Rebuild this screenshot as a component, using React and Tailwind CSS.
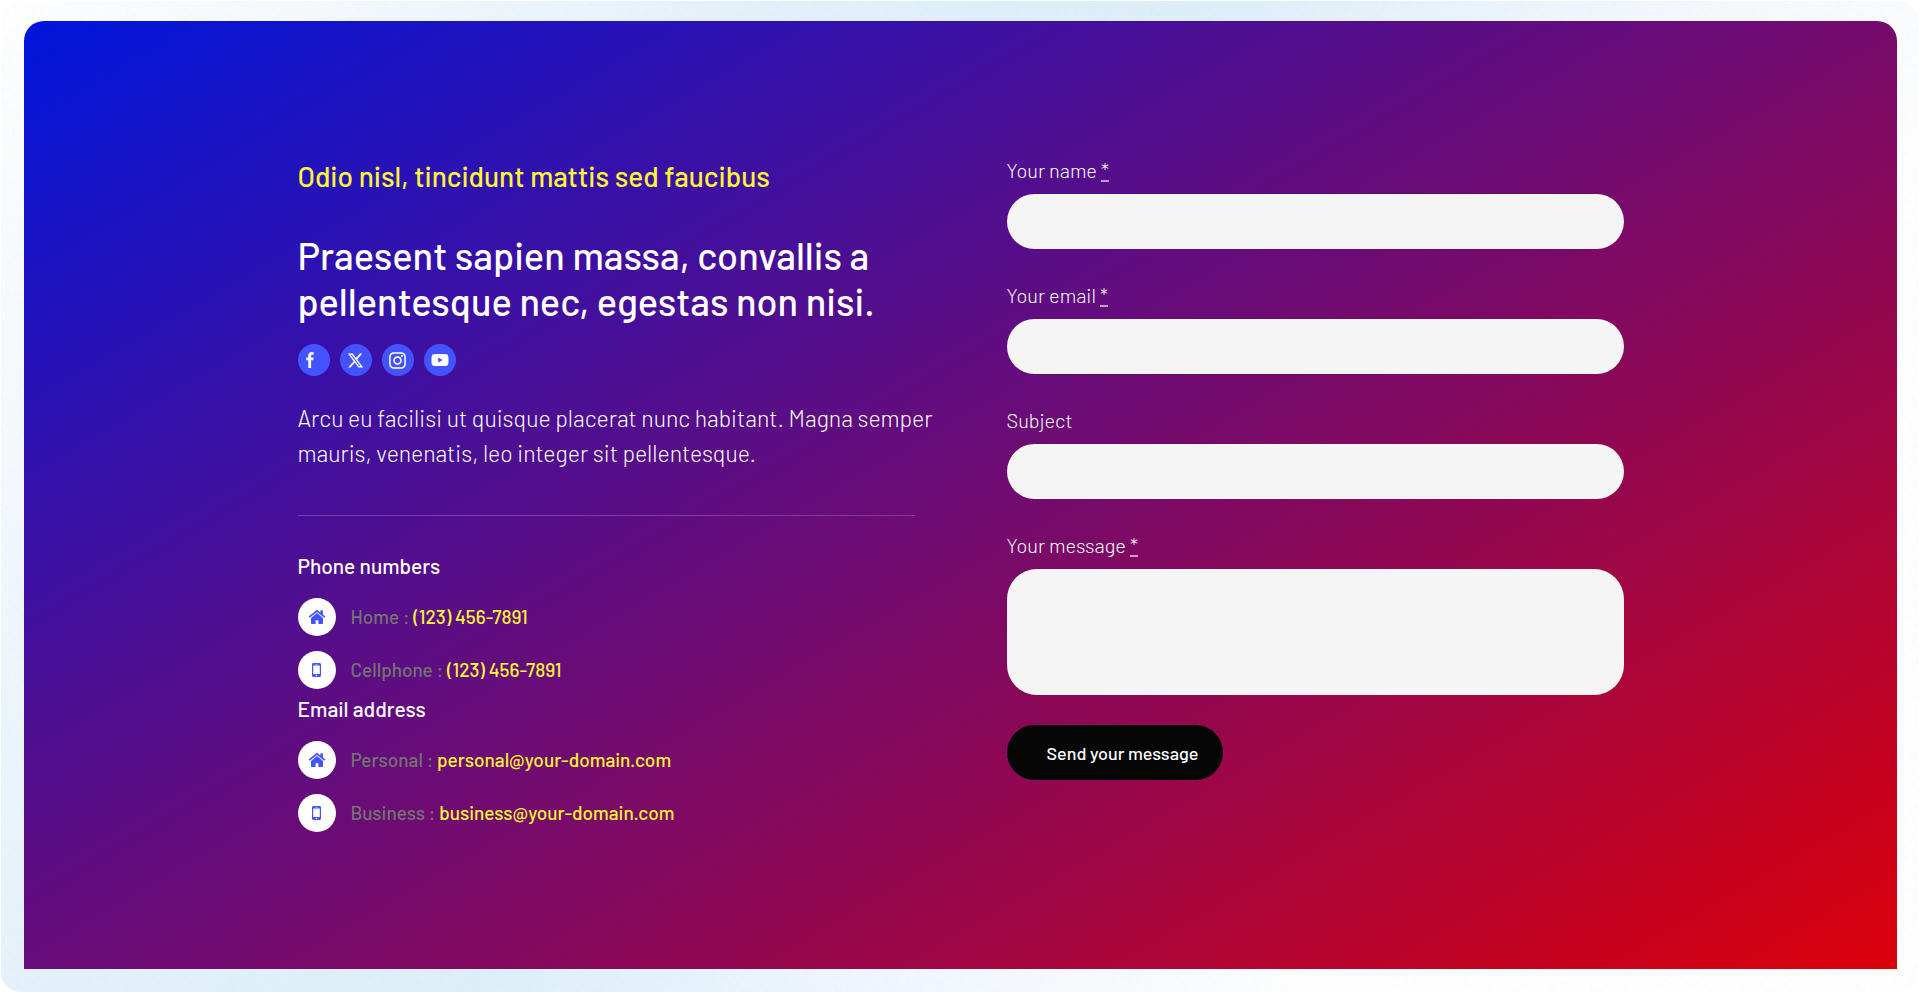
import { FaInstagram } from 'react-icons/fa';
import { FaXTwitter, FaYoutube } from 'react-icons/fa6';

const FacebookIcon = ({ size, className }) => (
    <svg width={size / 2} height={size} viewBox="0 0 8 16" fill="currentColor" className={className} aria-hidden="true">
        <path d="M7.600.1v2.600H6.200c-.9 0-1.100.5-1.100 1.100v1.700h2.500l-.3 2.700H5.100V16H2.300V8.200H.2V5.500h2.100V3.500C2.300 1.300 3.600 0 5.600 0c.9 0 1.700.1 2 .1z" />
    </svg>
);

const SOCIALS = [
    { id: 'facebook', label: 'Facebook', icon: FacebookIcon, size: 16, className: 'mr-2' },
    { id: 'x', label: 'X', icon: FaXTwitter, size: 17, className: '' },
    { id: 'instagram', label: 'Instagram', icon: FaInstagram, size: 19, className: '' },
    { id: 'youtube', label: 'YouTube', icon: FaYoutube, size: 18, className: '' },
];

const CONTACTS = [
    {
        title: 'Phone numbers',
        rows: [
            { label: 'Home', value: '(123) 456-7891', href: 'tel:1234567891', icon: 'home' },
            { label: 'Cellphone', value: '(123) 456-7891', href: 'tel:1234567891', icon: 'mobile' },
        ],
    },
    {
        title: 'Email address',
        rows: [
            { label: 'Personal', value: 'personal@your-domain.com', href: 'mailto:personal@your-domain.com', icon: 'home' },
            { label: 'Business', value: 'business@your-domain.com', href: 'mailto:business@your-domain.com', icon: 'mobile' },
        ],
    },
];

const FIELDS = [
    { id: 'name', label: 'Your name', type: 'text', required: true },
    { id: 'email', label: 'Your email', type: 'email', required: true },
    { id: 'subject', label: 'Subject', type: 'text', required: false },
];

const HomeIcon = () => (
    <svg width="18" height="16" viewBox="0 0 18 16" fill="currentColor" aria-hidden="true">
        <path d="M9 4.100 3 9v5.300c0 .4.300.7.700.7h3.900v-3.800h2.800V15h3.900c.4 0 .7-.3.700-.7V9z" />
        <path d="M9 1c.3 0 .7.100 1 .4l2.400 2V1.500c0-.2.100-.3.300-.3h1.900c.2 0 .3.100.3.300v3.900l2.200 1.800c.2.100.2.300.1.500l-.7.8c-.1.100-.3.200-.5 0L9 2.900 2 8.500c-.2.200-.4.100-.5 0l-.7-.8c-.1-.2-.1-.4.100-.5L8 1.400c.3-.3.700-.4 1-.4z" />
    </svg>
);

const MobileIcon = () => (
    <svg width="9" height="14" viewBox="0 0 9 14" fill="currentColor" aria-hidden="true">
        <path
            fillRule="evenodd"
            d="M1.500 0h6C8.300 0 9 .7 9 1.500v11c0 .8-.7 1.500-1.500 1.500h-6C.7 14 0 13.300 0 12.500v-11C0 .7.7 0 1.500 0zM1.200 2.500v8.500h6.600V2.500zM4.500 11.700a.8.8 0 1 0 0 1.600.8.8 0 0 0 0-1.600zM3.400 1v.4h2.200V1z"
        />
    </svg>
);

const Required = () => (
    <abbr title="required" className="underline decoration-white/60 decoration-solid decoration-2 underline-offset-2">*</abbr>
);

const ContactGroup = ({ title, rows }) => (
    <section>
        <h3 className="text-[21px] leading-8 font-medium">{title}</h3>
        <ul className="mt-4 flex flex-col gap-[15px]">
            {rows.map(row => (
                <li key={row.label} className="flex items-center gap-[15px] text-[19px] leading-6">
                    <span className="flex size-[38px] shrink-0 items-center justify-center rounded-full bg-white text-[#4353ff]">
                        {row.icon === 'home' ? <HomeIcon /> : <MobileIcon />}
                    </span>
                    <span className="font-medium text-[#747474]">
                        {row.label} : <a href={row.href} className="text-[#fff536]">{row.value}</a>
                    </span>
                </li>
            ))}
        </ul>
    </section>
);

const ContactInfo = () => (
    <div>
        <p className="mt-0.5 text-[28px] leading-9 font-medium text-[#fff536]">Odio nisl, tincidunt mattis sed faucibus</p>
        <h2 className="mt-[38px] text-[38px] leading-[46px] font-medium">
            Praesent sapien massa, convallis a<br />pellentesque nec, egestas non nisi.
        </h2>
        <ul className="mt-5 flex gap-[10px]">
            {SOCIALS.map(social => {
                const Icon = social.icon;
                return (
                    <li key={social.id}>
                        <a href="#" aria-label={social.label} className="flex size-8 items-center justify-center rounded-full bg-[#4353ff]">
                            <Icon size={social.size} className={social.className} />
                        </a>
                    </li>
                );
            })}
        </ul>
        <p className="mt-[25px] text-[23px] leading-[35px] font-light whitespace-nowrap">
            Arcu eu facilisi ut quisque placerat nunc habitant. Magna semper<br />
            mauris, venenatis, leo integer sit pellentesque.
        </p>
        <hr className="mt-11 mb-[34px] border-white/20" />
        <div className="flex flex-col gap-1">
            {CONTACTS.map(group => <ContactGroup key={group.title} {...group} />)}
        </div>
    </div>
);

const ContactForm = () => (
    <form className="flex flex-col items-start" onSubmit={e => e.preventDefault()}>
        {FIELDS.map(field => (
            <div key={field.id} className="mb-8 w-full">
                <label htmlFor={field.id} className="mb-[10px] block text-xl leading-7 font-light">
                    {field.label} {field.required && <Required />}
                </label>
                <input
                    id={field.id}
                    type={field.type}
                    required={field.required}
                    className="block h-[55px] w-full rounded-full bg-[#f5f5f5] px-6 text-gray-900"
                />
            </div>
        ))}
        <div className="mb-[30px] w-full">
            <label htmlFor="message" className="mb-[10px] block text-xl leading-7 font-light">
                Your message <Required />
            </label>
            <textarea
                id="message"
                required
                className="block h-[126px] w-full resize-none rounded-[30px] bg-[#f5f5f5] px-6 py-4 text-gray-900"
            />
        </div>
        <button type="submit" className="h-[55px] rounded-full bg-[#060606] pr-[25px] pl-10 text-lg font-medium">
            Send your message
        </button>
    </form>
);

export default function App() {
    return (
        <div className="min-h-screen bg-white p-px font-[Barlow,Roboto,sans-serif]">
            <main className="relative isolate flex min-h-[991px] flex-col overflow-hidden rounded-[20px] bg-[linear-gradient(126deg,#fff_0%,#f3f9fe_14%,#e4f2fc_29%,#ddeffa_45%,#f0f7fe_60%,#fff_77%)] pt-5 pr-[22px] pb-[23px] pl-[23px]">
                <svg className="absolute inset-0 -z-10 size-full opacity-5" aria-hidden="true">
                    <filter id="grain">
                        <feTurbulence type="fractalNoise" baseFrequency="0.25" numOctaves="2" />
                        <feColorMatrix type="saturate" values="0" />
                    </filter>
                    <rect width="100%" height="100%" filter="url(#grain)" />
                </svg>
                <div className="grow rounded-t-[20px] bg-linear-[150deg,#0016dc,#dc000a] pt-[135px] pb-[130px] text-white">
                    <div className="mx-auto grid max-w-[1326px] grid-cols-2 gap-[92px]">
                        <ContactInfo />
                        <ContactForm />
                    </div>
                </div>
            </main>
        </div>
    );
}
